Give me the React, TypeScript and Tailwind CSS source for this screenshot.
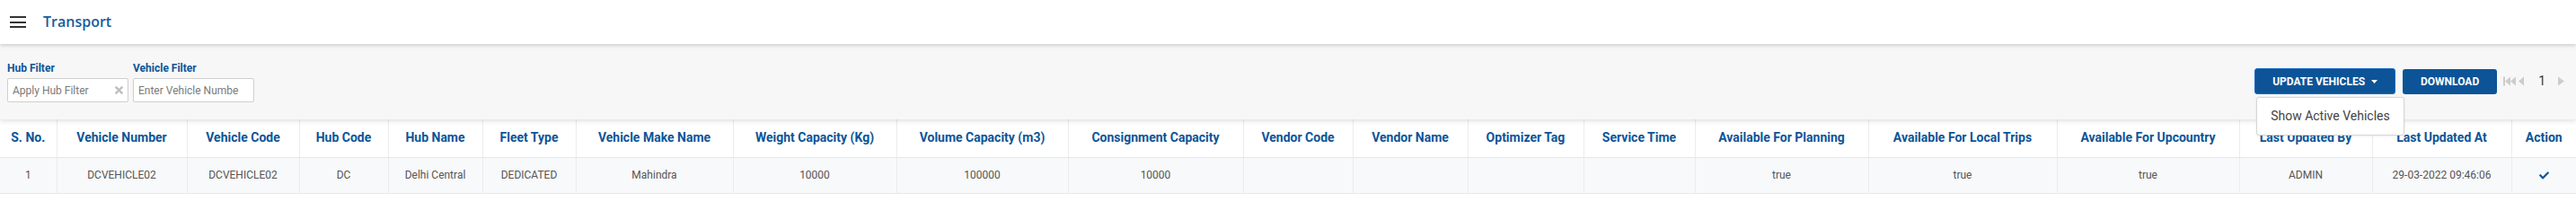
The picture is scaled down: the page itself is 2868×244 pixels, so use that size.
import { FaCheck } from "react-icons/fa";

const columns: { label: string; w: number }[] = [
  { label: "S. No.", w: 63 },
  { label: "Vehicle Number", w: 145 },
  { label: "Vehicle Code", w: 125 },
  { label: "Hub Code", w: 99 },
  { label: "Hub Name", w: 105 },
  { label: "Fleet Type", w: 104 },
  { label: "Vehicle Make Name", w: 175 },
  { label: "Weight Capacity (Kg)", w: 182 },
  { label: "Volume Capacity (m3)", w: 191 },
  { label: "Consignment Capacity", w: 195 },
  { label: "Vendor Code", w: 122 },
  { label: "Vendor Name", w: 128 },
  { label: "Optimizer Tag", w: 129 },
  { label: "Service Time", w: 124 },
  { label: "Available For Planning", w: 193 },
  { label: "Available For Local Trips", w: 210 },
  { label: "Available For Upcountry", w: 203 },
  { label: "Last Updated By", w: 148 },
  { label: "Last Updated At", w: 155 },
  { label: "Action", w: 72 },
];

const rows = [
  [
    "1",
    "DCVEHICLE02",
    "DCVEHICLE02",
    "DC",
    "Delhi Central",
    "DEDICATED",
    "Mahindra",
    "10000",
    "100000",
    "10000",
    "",
    "",
    "",
    "",
    "true",
    "true",
    "true",
    "ADMIN",
    "29-03-2022 09:46:06",
  ],
];

function FilterField({ label, placeholder, clearable }: { label: string; placeholder: string; clearable?: boolean }) {
  return (
    <div className="flex flex-col">
      <label className="text-[12px] leading-[14px] font-bold text-[#0c5497] mb-[4px]">{label}</label>
      <div className="relative w-[135px] h-[27px] bg-white border border-[#cfcfcf] rounded-[2px] flex items-center">
        <input
          placeholder={placeholder}
          className="w-full h-full pl-[5px] pr-[16px] text-[12px] text-[#555] placeholder:text-[#7a7a7a] outline-none bg-transparent"
        />
        {clearable && (
          <svg className="absolute right-[5px] top-[8px]" width="9" height="9" viewBox="0 0 10 10">
            <path d="M1.5 1.5 L8.5 8.5 M8.5 1.5 L1.5 8.5" stroke="#bdbdbd" strokeWidth="2.6" strokeLinecap="round" />
          </svg>
        )}
      </div>
    </div>
  );
}

function Pager() {
  return (
    <div className="flex items-center ml-[7px] h-[29px]">
      <svg width="24" height="11" viewBox="0 0 24 11">
        <rect x="0" y="0.5" width="2" height="10" fill="#cccccc" />
        <path d="M2 5.5 L8 0.5 L8 10.5 Z" fill="#cccccc" />
        <path d="M8 5.5 L14 0.5 L14 10.5 Z" fill="#cccccc" />
        <path d="M17 5.5 L23 0.5 L23 10.5 Z" fill="#cccccc" />
      </svg>
      <span className="ml-[15px] text-[14px] text-[#333]">1</span>
      <svg className="ml-[14px] mr-[13px]" width="7" height="11" viewBox="0 0 7 11">
        <path d="M0 0.5 L7 5.5 L0 10.5 Z" fill="#cccccc" />
      </svg>
    </div>
  );
}

export default function App() {
  return (
    <div className="w-[2868px] h-[244px] bg-white overflow-hidden font-['Roboto',sans-serif]">
      {/* top bar */}
      <div className="relative z-20 h-[49px] bg-white flex items-center shadow-[0_2px_4px_rgba(0,0,0,0.16)]">
        <div className="ml-[11px] w-[18px] flex flex-col gap-[3.5px]">
          <div className="h-[2px] bg-[#333]" />
          <div className="h-[2px] bg-[#333]" />
          <div className="h-[2px] bg-[#333]" />
        </div>
        <span className="ml-[19px] text-[16px] font-semibold text-[#1a5c9c] font-['Open_Sans',sans-serif] leading-none pb-[1px]">
          Transport
        </span>
      </div>

      {/* filters */}
      <div className="relative z-10 h-[84px] bg-[#f7f7f7] flex justify-between items-start shadow-[0_2px_5px_rgba(0,0,0,0.12)]">
        <div className="flex gap-[5px] pl-[8px] pt-[20px]">
          <FilterField label="Hub Filter" placeholder="Apply Hub Filter" clearable />
          <FilterField label="Vehicle Filter" placeholder="Enter Vehicle Number" />
        </div>
        <div className="flex items-center pt-[27px]">
          <div className="relative">
            <button className="h-[29px] w-[157px] bg-[#0c5497] border border-[#1b6bc4] rounded-[3px] text-white text-[12px] font-bold uppercase flex items-center justify-center gap-[7px]">
              Update Vehicles
              <svg width="7" height="4" viewBox="0 0 7 4">
                <path d="M0 0 L7 0 L3.5 4 Z" fill="#ffffff" />
              </svg>
            </button>
            <div className="absolute left-[2px] top-[32px] w-[165px] h-[43px] bg-white border border-[#d6d6d6] rounded-[3px] flex items-center pl-[15px] text-[14px] text-[#444] shadow-[0_1px_3px_rgba(0,0,0,0.08)]">
              Show Active Vehicles
            </div>
          </div>
          <button className="ml-[8px] h-[28px] w-[105px] bg-[#0c5497] rounded-[3px] text-white text-[12px] font-bold uppercase">
            Download
          </button>
          <Pager />
        </div>
      </div>

      {/* table */}
      <table className="table-fixed border-collapse w-[2868px]">
        <colgroup>
          {columns.map((c) => (
            <col key={c.label} style={{ width: c.w }} />
          ))}
        </colgroup>
        <thead>
          <tr className="h-[42px] bg-white">
            {columns.map((c, i) => (
              <th
                key={c.label}
                className={`text-[14px] font-bold text-[#0c5497] text-center whitespace-nowrap border-b border-[#e6e6e6] ${
                  i > 0 ? "border-l border-l-[#ececec]" : ""
                }`}
              >
                {c.label}
              </th>
            ))}
          </tr>
        </thead>
        <tbody>
          {rows.map((r, ri) => (
            <tr key={ri} className="h-[40px] bg-[#f8f9fa]">
              {r.map((v, i) => (
                <td
                  key={i}
                  className={`text-[12px] text-[#555] text-center whitespace-nowrap border-b border-[#e8e8e8] ${
                    i > 0 ? "border-l border-l-[#ececec]" : ""
                  }`}
                >
                  {v}
                </td>
              ))}
              <td className="border-b border-[#e8e8e8] border-l border-l-[#ececec]">
                <div className="flex justify-center">
                  <FaCheck className="text-[#0c5497]" size={11} />
                </div>
              </td>
            </tr>
          ))}
        </tbody>
      </table>
    </div>
  );
}
